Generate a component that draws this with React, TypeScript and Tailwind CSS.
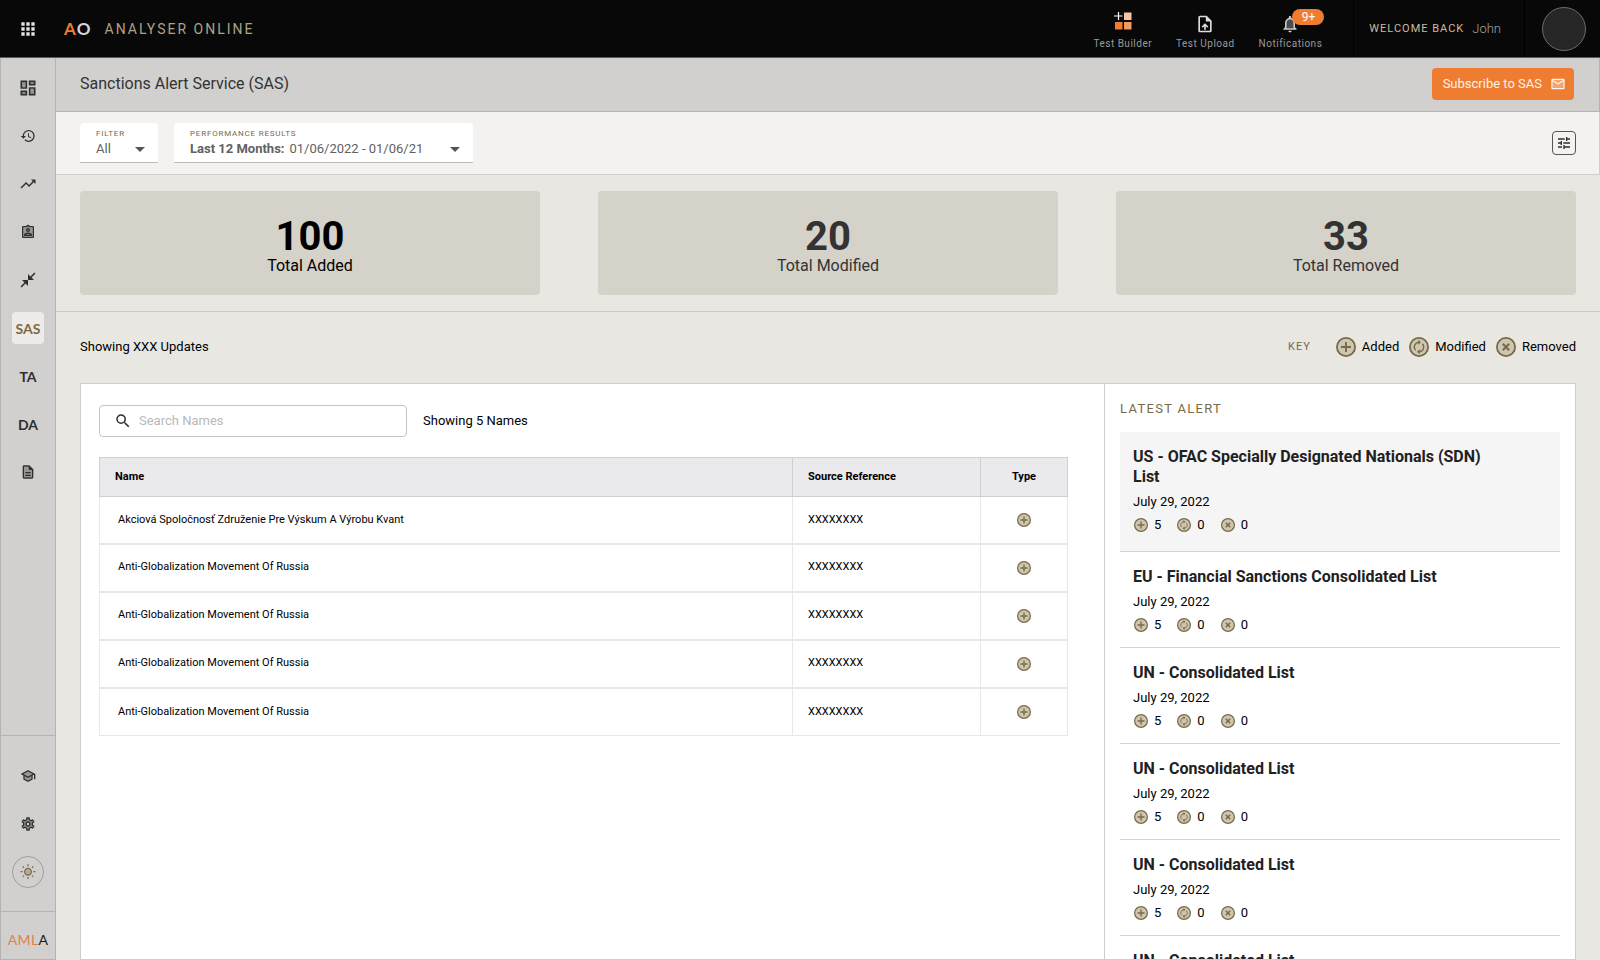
import type { ComponentType, ReactNode } from "react";
import {
  MdApps,
  MdArrowDropDown,
  MdCloseFullscreen,
  MdHistory,
  MdOutlineAssignmentInd,
  MdOutlineDashboard,
  MdOutlineDescription,
  MdOutlineEmail,
  MdOutlineNotifications,
  MdOutlineSchool,
  MdOutlineSettings,
  MdOutlineTune,
  MdOutlineUploadFile,
  MdOutlineWbSunny,
  MdSearch,
  MdTrendingUp,
} from "react-icons/md";

type Kind = "added" | "modified" | "removed";

/* An outlined icon laid over a translucent shape, in the two-tone style. */
function TwoTone({
  icon: Icon,
  shade,
  className,
}: {
  icon: ComponentType<{ size?: number }>;
  shade: string;
  className: string;
}) {
  return (
    <svg viewBox="0 0 24 24" fill="currentColor" className={className} aria-hidden="true">
      <path d={shade} fillRule="evenodd" opacity="0.35" />
      <Icon size={24} />
    </svg>
  );
}

function KindIcon({ kind, className }: { kind: Kind; className: string }) {
  return (
    <svg viewBox="0 0 20 20" className={className} fill="none" stroke="#7a6946" role="img" aria-label={kind}>
      <circle cx="10" cy="10" r="9.1" fill="#cdc6b2" strokeWidth="1.8" />
      {kind === "added" && <path d="M10 5v10M5 10h10" strokeWidth="1.9" />}
      {kind === "removed" && <path d="M6.8 6.8l6.4 6.4M13.2 6.8l-6.4 6.4" strokeWidth="2.1" />}
      {kind === "modified" && (
        <>
          <path d="M6.6 13.2A4.7 4.7 0 0 1 9.6 5.3M13.4 6.8A4.7 4.7 0 0 1 10.4 14.7" strokeWidth="1.3" />
          <path d="M9.2 2.8v5L12 5.3zM10.8 17.2v-5L8 14.7z" fill="#7a6946" stroke="none" />
        </>
      )}
    </svg>
  );
}

function BuilderIcon() {
  return (
    <svg viewBox="0 0 18 18" className="size-[18px] self-start" aria-hidden="true">
      <path d="M4.5 0v8M0 4h8.5" stroke="#ffffff" strokeWidth="1.2" />
      <rect x="10" y="0.5" width="7.5" height="7.5" fill="#f7c3a0" />
      <rect x="1" y="10" width="7.5" height="7.5" fill="#ee7d31" />
      <rect x="10" y="10" width="7.5" height="7.5" fill="#f19b60" />
    </svg>
  );
}

function HeaderAction({ label, children }: { label: string; children: ReactNode }) {
  return (
    <button type="button" className="flex flex-col items-center gap-0.5">
      <span className="relative flex h-[22px] items-end justify-center">{children}</span>
      <span className="text-[10px] leading-4 tracking-wider text-[#9a9a9a]">{label}</span>
    </button>
  );
}

function NavItem({ label, active, children }: { label: string; active?: boolean; children: ReactNode }) {
  return (
    <a
      href="#"
      aria-label={label}
      className={
        active
          ? "flex size-8 items-center justify-center rounded bg-[#edece9] text-[#7a6946]"
          : "flex size-8 items-center justify-center text-[#2f2f2f]"
      }
    >
      {children}
    </a>
  );
}

function NavText({ children }: { children: ReactNode }) {
  return <span className="pt-0.5 font-[Lato] text-sm leading-5 font-bold">{children}</span>;
}

const stats = [
  { value: "100", label: "Total Added", tone: "text-black" },
  { value: "20", label: "Total Modified", tone: "text-[#333333]" },
  { value: "33", label: "Total Removed", tone: "text-[#333333]" },
];

const rows = [
  { id: 1, name: "Akciová Spoločnosť Združenie Pre Výskum A Výrobu Kvant", source: "XXXXXXXX" },
  { id: 2, name: "Anti-Globalization Movement Of Russia", source: "XXXXXXXX" },
  { id: 3, name: "Anti-Globalization Movement Of Russia", source: "XXXXXXXX" },
  { id: 4, name: "Anti-Globalization Movement Of Russia", source: "XXXXXXXX" },
  { id: 5, name: "Anti-Globalization Movement Of Russia", source: "XXXXXXXX" },
];

const alerts = [
  { id: 1, title: "US - OFAC Specially Designated Nationals (SDN) List" },
  { id: 2, title: "EU - Financial Sanctions Consolidated List" },
  { id: 3, title: "UN - Consolidated List" },
  { id: 4, title: "UN - Consolidated List" },
  { id: 5, title: "UN - Consolidated List" },
  { id: 6, title: "UN - Consolidated List" },
];

const counts: { kind: Kind; value: number }[] = [
  { kind: "added", value: 5 },
  { kind: "modified", value: 0 },
  { kind: "removed", value: 0 },
];

const legend: { kind: Kind; label: string }[] = [
  { kind: "added", label: "Added" },
  { kind: "modified", label: "Modified" },
  { kind: "removed", label: "Removed" },
];

function Header() {
  return (
    <header className="flex h-[58px] shrink-0 items-stretch border-b border-[#5c5856] bg-[#080808]">
      <div className="flex flex-1 items-center pl-[18px]">
        <button type="button" aria-label="Applications" className="text-[#e4e4e4]">
          <MdApps className="size-5" />
        </button>
        <div className="ml-[26px] flex items-center gap-px font-[Lato] text-[17px] leading-5 font-bold text-[#d3d7db]">
          <span className="text-[#ee7d31]">A</span>
          <span>O</span>
        </div>
        <span className="ml-[14px] text-sm tracking-[2px] text-[#aea287]">ANALYSER ONLINE</span>
      </div>
      <nav aria-label="Tools" className="flex items-center gap-6 pt-1.5 pr-[31px]">
        <HeaderAction label="Test Builder">
          <BuilderIcon />
        </HeaderAction>
        <HeaderAction label="Test Upload">
          <MdOutlineUploadFile className="size-5 text-[#dddddd]" />
        </HeaderAction>
        <HeaderAction label="Notifications">
          <TwoTone
            icon={MdOutlineNotifications}
            shade="M12 6.5c-2.5 0-4 2-4 4.5v6h8v-6c0-2.5-1.5-4.5-4-4.5z"
            className="size-5 text-[#cccccc]"
          />
          <span className="absolute -top-[3px] left-3 flex h-4 w-8 items-center justify-center rounded-full bg-[#ee7d31] text-xs text-white">
            9+
          </span>
        </HeaderAction>
      </nav>
      <div className="flex items-center gap-2 border-l border-black pr-[23px] pl-[15px]">
        <span className="text-[11px] leading-5 tracking-[1px] text-[#c9bd9f]">WELCOME BACK</span>
        <span className="text-[13px] leading-5 font-light text-[#a5a5a5]">John</span>
      </div>
      <div className="flex items-center border-l border-black pr-[14px] pl-[17px]">
        <button
          type="button"
          aria-label="Profile"
          className="size-11 rounded-full border border-[#6b6b6b] bg-[#262626]"
        />
      </div>
    </header>
  );
}

function Sidebar() {
  return (
    <aside className="flex w-14 shrink-0 flex-col border-x border-b border-[#b5b3b1] bg-[#d1d0ce]">
      <nav aria-label="Main" className="flex flex-1 flex-col items-center gap-4 pt-[14px]">
        <NavItem label="Dashboard">
          <TwoTone
            icon={MdOutlineDashboard}
            shade="M5 5h4v6H5zM15 5h4v2h-4zM15 13h4v6h-4zM5 17h4v2H5z"
            className="size-5"
          />
        </NavItem>
        <NavItem label="History">
          <MdHistory className="size-4" />
        </NavItem>
        <NavItem label="Trends">
          <MdTrendingUp className="size-[18px]" />
        </NavItem>
        <NavItem label="Assignments">
          <TwoTone icon={MdOutlineAssignmentInd} shade="M5 5h14v14H5z" className="size-4" />
        </NavItem>
        <NavItem label="Collapse">
          <MdCloseFullscreen className="size-[18px]" />
        </NavItem>
        <NavItem label="SAS" active>
          <NavText>SAS</NavText>
        </NavItem>
        <NavItem label="TA">
          <NavText>TA</NavText>
        </NavItem>
        <NavItem label="DA">
          <NavText>DA</NavText>
        </NavItem>
        <NavItem label="Documents">
          <TwoTone icon={MdOutlineDescription} shade="M6 20h12V9h-5V4H6z" className="size-4" />
        </NavItem>
      </nav>
      <div className="flex flex-col items-center gap-4 border-y border-[#b5b3b1] pt-6 pb-[23px]">
        <NavItem label="Training">
          <TwoTone
            icon={MdOutlineSchool}
            shade="M12 5L5 9l7 3.8L19 9zM7 12v4l5 2.7 5-2.7v-4l-5 2.7z"
            className="size-4"
          />
        </NavItem>
        <NavItem label="Settings">
          <TwoTone
            icon={MdOutlineSettings}
            shade="M12 4.5a7.5 7.5 0 1 0 0 15 7.5 7.5 0 0 0 0-15zM12 10a2 2 0 1 1 0 4 2 2 0 0 1 0-4z"
            className="size-4"
          />
        </NavItem>
        <button
          type="button"
          aria-label="Light theme"
          className="flex size-8 items-center justify-center rounded-full border border-[#a09e9b] text-[#7a6946]"
        >
          <TwoTone
            icon={MdOutlineWbSunny}
            shade="M12 7.5a4 4 0 1 0 0 8 4 4 0 0 0 0-8z"
            className="size-4"
          />
        </button>
      </div>
      <div className="flex h-[47px] items-center justify-center pt-2 font-[Lato] text-sm leading-5 tracking-wide">
        <span className="text-[#e0814b]">AML</span>
        <span className="text-[#1c1c1c]">A</span>
      </div>
    </aside>
  );
}

function FilterBar() {
  return (
    <div className="flex items-center justify-between border-r border-b border-[#cfcecc] bg-[#f3f2f0] py-[11px] pr-[23px] pl-6">
      <div className="flex gap-4">
        <div className="w-[78px] rounded-t border-b border-[#bcbcbc] bg-white px-4 pt-1 pb-[5px]">
          <label htmlFor="filter" className="block text-[8px] leading-[14px] tracking-widest text-[#7a6946]">
            FILTER
          </label>
          <div className="flex h-4 items-center justify-between">
            <select id="filter" className="w-6 appearance-none text-[13px] leading-4 text-[#616161]">
              <option>All</option>
            </select>
            <MdArrowDropDown className="-mr-[10px] size-6 shrink-0 text-[#555555]" aria-hidden="true" />
          </div>
        </div>
        <div className="w-[299px] rounded-t border-b border-[#bcbcbc] bg-white px-4 pt-1 pb-[5px]">
          <label htmlFor="period" className="block text-[8px] leading-[14px] tracking-widest text-[#7a6946]">
            PERFORMANCE RESULTS
          </label>
          <div className="flex h-4 items-center text-[13px] leading-4 text-[#616161]">
            <span className="font-bold">Last 12 Months:</span>
            <select id="period" className="ml-[5px] flex-1 appearance-none">
              <option>01/06/2022 - 01/06/21</option>
            </select>
            <MdArrowDropDown className="-mr-[10px] size-6 shrink-0 text-[#555555]" aria-hidden="true" />
          </div>
        </div>
      </div>
      <button
        type="button"
        aria-label="Adjust view"
        className="flex size-6 items-center justify-center rounded border border-[#555555] text-[#2f2f2f]"
      >
        <MdOutlineTune className="size-4" />
      </button>
    </div>
  );
}

function NamesPane() {
  return (
    <section aria-label="Names" className="flex-1 pt-[21px] pr-9 pl-[18px]">
      <div className="flex items-center gap-4">
        <label className="flex h-8 w-[308px] items-center gap-[7px] rounded border border-[#c4c4c4] pl-[14px] text-[#2f2f2f]">
          <MdSearch className="size-[18px]" aria-hidden="true" />
          <input
            type="search"
            aria-label="Search Names"
            placeholder="Search Names"
            className="min-w-0 flex-1 text-[13px] outline-none placeholder:text-[#b9b9b9]"
          />
        </label>
        <span className="text-[13px]">Showing 5 Names</span>
      </div>
      <table className="mt-5 w-full table-fixed border-collapse text-left text-[11px]">
        <colgroup>
          <col />
          <col className="w-[188px]" />
          <col className="w-[87px]" />
        </colgroup>
        <thead>
          <tr className="h-[39px] bg-[#eaeaec]">
            <th className="border border-[#cfcfcf] px-[15px] font-bold">Name</th>
            <th className="border border-[#cfcfcf] px-[15px] font-bold">Source Reference</th>
            <th className="border border-[#cfcfcf] text-center font-bold">Type</th>
          </tr>
        </thead>
        <tbody>
          {rows.map((row) => (
            <tr key={row.id} className="h-12 border-b-2 border-[#e8e8ec] first:h-[47px] last:border-b">
              <td className="border-x border-[#e8e8ec] px-[18px]">{row.name}</td>
              <td className="border-x border-[#e8e8ec] px-[15px]">{row.source}</td>
              <td className="border-x border-[#e8e8ec]">
                <KindIcon kind="added" className="mx-auto size-[14px]" />
              </td>
            </tr>
          ))}
        </tbody>
      </table>
    </section>
  );
}

function AlertsPane() {
  return (
    <section
      aria-label="Latest alert"
      className="w-[471px] shrink-0 overflow-y-auto border-l border-[#cfcecc] px-[15px] pt-[17px] [scrollbar-width:none]"
    >
      <h2 className="text-[13px] leading-4 tracking-widest text-[#7a6946]">LATEST ALERT</h2>
      <ul className="mt-[15px]">
        {alerts.map((alert) => (
          <li
            key={alert.id}
            className="border-b border-[#d4d4d4] px-[13px] pt-[15px] pb-3 first:bg-[#f5f5f5] first:pb-4"
          >
            <h3 className="max-w-[360px] text-base leading-5 font-bold text-[#212121]">{alert.title}</h3>
            <p className="mt-[5px] text-[13px] leading-5">July 29, 2022</p>
            <div className="mt-[3px] flex gap-4 pl-px">
              {counts.map((count) => (
                <span key={count.kind} className="flex items-center gap-[6px] text-[13px] leading-5">
                  <KindIcon kind={count.kind} className="size-[14px]" />
                  {count.value}
                </span>
              ))}
            </div>
          </li>
        ))}
      </ul>
    </section>
  );
}

export default function App() {
  return (
    <div className="flex h-screen flex-col bg-[#e8e7e2] font-[Roboto,sans-serif] text-black">
      <Header />
      <div className="flex min-h-0 flex-1">
        <Sidebar />
        <main className="flex min-w-0 flex-1 flex-col">
          <div className="flex items-center justify-between border-r border-b border-[#b5b3b1] bg-[#d1d0ce] pt-[10px] pr-[25px] pb-[11px] pl-6">
            <h1 className="text-base text-[#333333]">Sanctions Alert Service (SAS)</h1>
            <button
              type="button"
              className="flex h-8 items-center gap-2 rounded bg-[#ee7d31] px-2 pl-[11px] text-[13px] text-[#fdf1e8]"
            >
              Subscribe to SAS
              <TwoTone icon={MdOutlineEmail} shade="M4 6h16v12H4z" className="size-4" />
            </button>
          </div>
          <FilterBar />
          <div className="grid grid-cols-3 gap-[58px] border-b border-[#cac9c5] px-6 py-4">
            {stats.map((stat) => (
              <div
                key={stat.label}
                className={`flex h-[104px] flex-col items-center rounded bg-[#d5d2c9] pt-[26px] ${stat.tone}`}
              >
                <span className="text-[40px] leading-[39px] font-bold">{stat.value}</span>
                <span className="text-base leading-5">{stat.label}</span>
              </div>
            ))}
          </div>
          <div className="flex h-[71px] shrink-0 items-center justify-between px-6 pb-[2px] text-[13px]">
            <span>Showing XXX Updates</span>
            <div className="flex items-center gap-[10px]">
              <span className="mr-[15px] text-[11px] leading-5 tracking-[1px] text-[#7a6946]">KEY</span>
              {legend.map((item) => (
                <span key={item.kind} className="flex items-center gap-[6px]">
                  <KindIcon kind={item.kind} className="size-5" />
                  {item.label}
                </span>
              ))}
            </div>
          </div>
          <div className="mx-6 flex min-h-0 flex-1 border border-[#cfcecc] bg-white">
            <NamesPane />
            <AlertsPane />
          </div>
        </main>
      </div>
    </div>
  );
}
